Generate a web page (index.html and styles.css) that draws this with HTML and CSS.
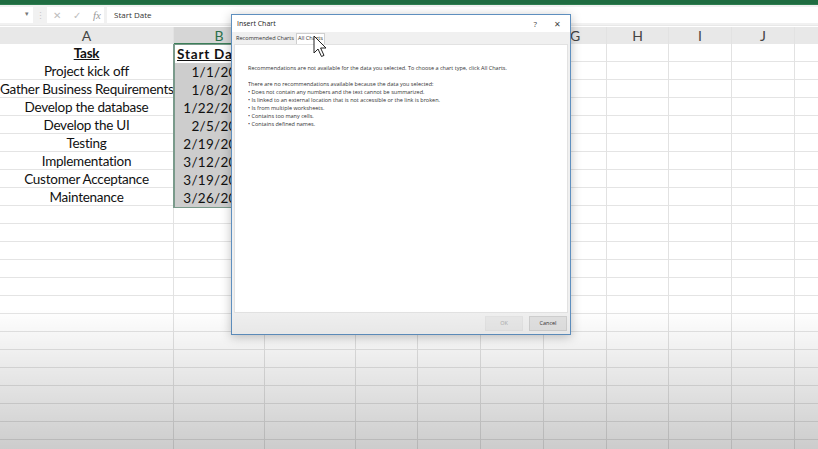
FILE: index.html
```html
<!doctype html>
<html>
<head>
<meta charset="utf-8">
<title>Insert Chart</title>
<link rel="stylesheet" href="styles.css">
</head>
<body>
  <div class="app">
    <div class="ribbon-edge"></div>

    <div class="formula-bar">
      <div class="name-box"><span class="caret">&#9662;</span></div>
      <div class="dots">&#8942;</div>
      <div class="fx-tools">
        <span class="tool">&#10005;</span>
        <span class="tool">&#10003;</span>
        <span class="tool fx">fx</span>
      </div>
      <div class="formula-input">Start Date</div>
    </div>

    <div class="sheet">
      <div class="col col-a">
        <div class="col-head">A</div>
        <div class="col-body">
          <div class="cell title">Task</div>
          <div class="cell">Project kick off</div>
          <div class="cell">Gather Business Requirements</div>
          <div class="cell">Develop the database</div>
          <div class="cell">Develop the UI</div>
          <div class="cell">Testing</div>
          <div class="cell">Implementation</div>
          <div class="cell">Customer Acceptance</div>
          <div class="cell">Maintenance</div>
        </div>
      </div>
      <div class="col col-b">
        <div class="col-head active">B</div>
        <div class="col-body">
          <div class="selection">
            <div class="cell title">Start Date</div>
            <div class="cell date">1/1/2020</div>
            <div class="cell date">1/8/2020</div>
            <div class="cell date">1/22/2020</div>
            <div class="cell date">2/5/2020</div>
            <div class="cell date">2/19/2020</div>
            <div class="cell date">3/12/2020</div>
            <div class="cell date">3/19/2020</div>
            <div class="cell date">3/26/2020</div>
          </div>
        </div>
      </div>
      <div class="col w91"><div class="col-head">C</div><div class="col-body"></div></div>
      <div class="col w62"><div class="col-head">D</div><div class="col-body"></div></div>
      <div class="col w63"><div class="col-head">E</div><div class="col-body"></div></div>
      <div class="col w63"><div class="col-head">F</div><div class="col-body"></div></div>
      <div class="col w63"><div class="col-head">G</div><div class="col-body"></div></div>
      <div class="col w62"><div class="col-head">H</div><div class="col-body"></div></div>
      <div class="col w63"><div class="col-head">I</div><div class="col-body"></div></div>
      <div class="col w63"><div class="col-head">J</div><div class="col-body"></div></div>
      <div class="col rest"><div class="col-head"></div><div class="col-body"></div></div>
    </div>

    <div class="dialog">
      <div class="dialog-title">
        <span>Insert Chart</span>
        <span class="title-btns"><span>?</span><span class="close">&#10005;</span></span>
      </div>
      <div class="tabs">
        <span class="tab">Recommended Charts</span>
        <span class="tab selected">All Charts</span>
      </div>
      <div class="dialog-body">
        <div class="line">Recommendations are not available for the data you selected. To choose a chart type, click All Charts.</div>
        <div class="gap"></div>
        <div class="line">There are no recommendations available because the data you selected:</div>
        <div class="line">&bull; Does not contain any numbers and the text cannot be summarized.</div>
        <div class="line">&bull; Is linked to an external location that is not accessible or the link is broken.</div>
        <div class="line">&bull; Is from multiple worksheets.</div>
        <div class="line">&bull; Contains too many cells.</div>
        <div class="line">&bull; Contains defined names.</div>
      </div>
      <div class="dialog-foot">
        <span class="btn disabled">OK</span>
        <span class="btn">Cancel</span>
      </div>
    </div>

    <svg class="cursor" width="16" height="24" viewBox="0 0 16 24">
      <path d="M1 1 L1 18 L5 14 L8.5 21.5 L11 20.4 L7.6 13 L13 13 Z" fill="#fff" stroke="#222" stroke-width="1" stroke-linejoin="round"/>
    </svg>

    <div class="fade"></div>
  </div>
</body>
</html>
```

FILE: styles.css
```css
html, body { margin:0; padding:0; background:#fff; }

.app {
  position:relative;
  width:818px;
  height:449px;
  overflow:hidden;
  font-family:Lato, "Open Sans", sans-serif;
  display:flex;
  flex-direction:column;
}

.ribbon-edge {
  height:4px;
  background:#1f6c41;
  border-bottom:1px solid #2e7d50;
}

/* formula bar */
.formula-bar {
  display:flex;
  align-items:center;
  height:20px;
  background:#f1f1f1;
  border-bottom:1px solid #e8e8e8;
}
.name-box {
  width:33px;
  height:16px;
  background:#fff;
  position:relative;
}
.caret {
  position:absolute;
  right:4px;
  top:2px;
  font-size:7px;
  color:#777;
}
.dots {
  width:14px;
  text-align:center;
  font-size:9px;
  color:#c8c8c8;
}
.fx-tools {
  display:flex;
  align-items:center;
  gap:12px;
  width:57px;
  height:16px;
  background:#fff;
  padding-left:6px;
  box-sizing:border-box;
}
.tool { font-size:10px; color:#bdbdbd; }
.tool.fx { font-family:"Liberation Serif", serif; font-style:italic; font-size:11px; color:#9a9a9a; }
.formula-input {
  flex:1;
  height:16px;
  margin-left:3px;
  background:#fff;
  font-family:"Open Sans", sans-serif;
  font-size:8px;
  color:#333;
  line-height:16px;
  padding-left:7px;
}

/* sheet */
.sheet {
  flex:1;
  display:flex;
  margin-top:1px;
}
.col {
  display:flex;
  flex-direction:column;
  border-right:1px solid #e2e2e2;
  box-sizing:border-box;
}
.col-a { width:174px; }
.col-b { width:91px; }
.w91 { width:91px; }
.w62 { width:62px; }
.w63 { width:63px; }
.rest { flex:1; border-right:0; }

.col-head {
  height:17px;
  background:#e8e8e8;
  text-align:center;
  font-size:14px;
  line-height:17px;
  color:#444;
}
.col-head.active {
  background:#d6d6d6;
  color:#2a6f4a;
  border-bottom:1px solid #3b7e58;
  height:16px;
}
.col-body {
  flex:1;
  background:repeating-linear-gradient(to bottom, transparent 0 17px, #e4e4e4 17px 18px);
}

.cell {
  height:18px;
  line-height:18px;
  font-size:13.5px;
  color:#111;
  text-align:center;
  white-space:nowrap;
  overflow:hidden;
}
.col-a .cell { letter-spacing:-0.25px; }
.cell.title {
  font-weight:bold;
  text-decoration:underline;
  background:#fff;
}
.col-b .cell.title { text-align:left; padding-left:2px; letter-spacing:0.8px; }

.selection {
  border:1px solid #7a9a8b;
  border-left-width:2px;
  margin-left:-1px;
}
.cell.date {
  background:#cdcdcd;
  text-align:right;
  padding-right:10px;
  letter-spacing:0.3px;
}

/* dialog */
.dialog {
  position:absolute;
  left:231px;
  top:14px;
  width:340px;
  height:321px;
  box-sizing:border-box;
  background:#f0f0f0;
  border:1px solid #5e8fbf;
  box-shadow:0 2px 10px rgba(0,0,0,.25);
  display:flex;
  flex-direction:column;
  font-family:"Open Sans", sans-serif;
  color:#222;
}
.dialog-title {
  height:17px;
  background:#fff;
  display:flex;
  justify-content:space-between;
  align-items:center;
  padding:0 9px 0 5px;
  font-size:7px;
}
.title-btns { display:flex; gap:17px; font-size:8px; color:#444; }
.title-btns .close { font-size:8px; }

.tabs {
  display:flex;
  gap:1px;
  height:11px;
  padding:1px 0 0 3px;
  background:#f0f0f0;
  font-size:5.6px;
  line-height:10px;
}
.tab { padding:0 1px; color:#333; }
.tab.selected {
  background:#fff;
  border:1px solid #cfcfcf;
  border-bottom:0;
  line-height:9px;
}

.dialog-body {
  flex:1;
  margin:0 2px;
  background:#fff;
  border:1px solid #e2e2e2;
  padding:19px 13px 0;
  font-size:5.5px;
  color:#333;
}
.line { height:8px; line-height:8px; white-space:nowrap; overflow:hidden; }
.gap { height:8px; }

.dialog-foot {
  height:21px;
  display:flex;
  justify-content:flex-end;
  align-items:center;
  gap:6px;
  padding-right:3px;
}
.btn {
  width:36px;
  height:13px;
  line-height:13px;
  text-align:center;
  font-size:5.5px;
  background:#e1e1e1;
  border:1px solid #cfcfcf;
  color:#333;
}
.btn.disabled { color:#aaa; background:#e8e8e8; border-color:#e3e3e3; }

.cursor {
  position:absolute;
  left:313px;
  top:35px;
}

.fade {
  position:absolute;
  left:0;
  right:0;
  bottom:0;
  height:140px;
  background:linear-gradient(to bottom, rgba(0,0,0,0), rgba(0,0,0,.2));
  pointer-events:none;
}
```
